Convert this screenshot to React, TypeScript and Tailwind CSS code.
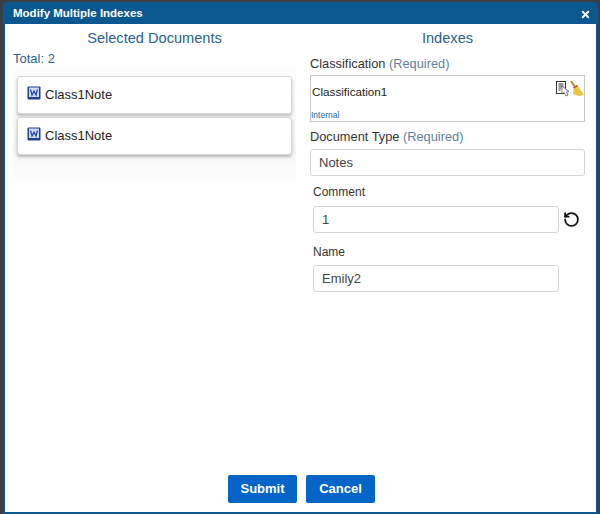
import { RotateCcw, X } from "lucide-react";

function WordIcon() {
  return (
    <svg width="14" height="14" viewBox="0 0 14 14" className="shrink-0 mb-[5px]">
      <rect x="0.5" y="0.5" width="13" height="13" rx="1" fill="#1f3f8f" />
      <rect x="2" y="1.5" width="10" height="9.5" fill="#cfdcf2" />
      <path d="M3.5 3.5 L5 9 L7 5 L9 9 L10.5 3.5" fill="none" stroke="#1c46a8" strokeWidth="1.2" />
    </svg>
  );
}

function DocIcon() {
  return (
    <svg width="14" height="16" viewBox="0 0 14 16">
      <rect x="0.5" y="0.5" width="9" height="12" fill="#fff" stroke="#333" />
      <path d="M2.5 3h5M2.5 5h5M2.5 7h3M2.5 9h2" stroke="#333" />
      <path d="M6 5 L6 13 L8 11.5 L10 15 L12 14 L10.5 11 L13 10.5 Z" fill="#fff" stroke="#555" strokeWidth="0.8" />
    </svg>
  );
}

function BroomIcon() {
  return (
    <svg width="15" height="16" viewBox="0 0 15 16">
      <path d="M1 0 L5 6" stroke="#b8922c" strokeWidth="2" />
      <path d="M4 6 L7 4 L14 14 L9 15 L3 13 Z" fill="#e8c53e" />
      <path d="M3.5 7 L7.5 4.5" stroke="#c0392b" strokeWidth="1.4" />
    </svg>
  );
}

function DocRow() {
  return (
    <div className="h-[38px] flex items-center gap-[4px] pl-[9px] bg-white rounded-[3px] border border-[#d8d8d8] shadow-[0_2px_3px_rgba(0,0,0,0.25)] text-[13px] text-[#222]">
      <WordIcon />
      <span>Class1Note</span>
    </div>
  );
}

function Field({ value, className }: { value: string; className: string }) {
  return (
    <div className={`h-[27px] flex items-center px-[8px] bg-white border border-[#d5d5d5] rounded-[3px] text-[13px] text-[#444] ${className}`}>
      {value}
    </div>
  );
}

export default function App() {
  return (
    <div className="w-[600px] h-[514px] bg-[#3a3f45] pt-[2px] pl-[3px] pr-[2px] overflow-hidden font-['Liberation_Sans',Arial,sans-serif]">
      <div className="h-[512px] flex flex-col bg-white border-[2px] border-[#0b5890] rounded-t-[4px]">
        <div className="h-[20px] shrink-0 flex items-center justify-between bg-[#0b5890] pl-[8px] pr-[5px] text-white">
          <span className="text-[11.5px] font-bold">Modify Multiple Indexes</span>
          <X size={11} strokeWidth={4} />
        </div>

        <div className="flex-1 flex">
          <div className="w-[296px] shrink-0 pl-[8px] pr-[5px]">
            <div className="text-center text-[14.6px] leading-[16px] text-[#2a5f8f] mt-[6px]">Selected Documents</div>
            <div className="text-[13px] leading-[14px] text-[#2a5f8f] mt-[6px]">Total: 2</div>
            <div className="mt-[3px] px-[4px] pt-[7px] pb-[30px] flex flex-col gap-[3px] bg-linear-to-b from-[#fcfcfc] via-[#f5f5f5] via-70% to-white">
              <DocRow />
              <DocRow />
            </div>
          </div>

          <div className="flex-1 pl-[9px]">
            <div className="w-[275px] text-center text-[14.6px] leading-[16px] text-[#2a5f8f] mt-[6px]">Indexes</div>
            <div className="text-[12.8px] leading-[15px] text-[#333] mt-[10px]">
              Classification <span className="text-[#5f7f9c]">(Required)</span>
            </div>
            <div className="w-[275px] h-[47px] mt-[4px] flex flex-col justify-between border border-[#c8c8c8] pt-[9px] relative">
              <span className="pl-[1px] text-[11.7px] leading-[14px] text-[#222]">Classification1</span>
              <span className="text-[8.5px] leading-[12px] text-[#1e6aa8]">Internal</span>
              <div className="absolute right-[-1px] top-[5px] flex">
                <DocIcon />
                <BroomIcon />
              </div>
            </div>
            <div className="text-[12.8px] leading-[15px] text-[#333] mt-[7px]">
              Document Type <span className="text-[#5f7f9c]">(Required)</span>
            </div>
            <Field value="Notes" className="w-[275px] mt-[5px]" />
            <div className="pl-[3px]">
              <div className="text-[12px] leading-[14px] text-[#333] mt-[9px]">Comment</div>
              <div className="flex items-center gap-[4px] mt-[7px]">
                <Field value="1" className="w-[246px]" />
                <RotateCcw size={17} strokeWidth={2.5} className="text-[#111]" />
              </div>
              <div className="text-[12px] leading-[14px] text-[#333] mt-[12px]">Name</div>
              <Field value="Emily2" className="w-[246px] mt-[6px]" />
            </div>
          </div>
        </div>

        <div className="flex justify-center gap-[9px] pb-[9px] pl-[2px]">
          <button className="w-[69px] h-[28px] bg-[#0564c8] rounded-[2px] text-white text-[13px] font-bold">Submit</button>
          <button className="w-[69px] h-[28px] bg-[#0564c8] rounded-[2px] text-white text-[13px] font-bold">Cancel</button>
        </div>
      </div>
    </div>
  );
}
